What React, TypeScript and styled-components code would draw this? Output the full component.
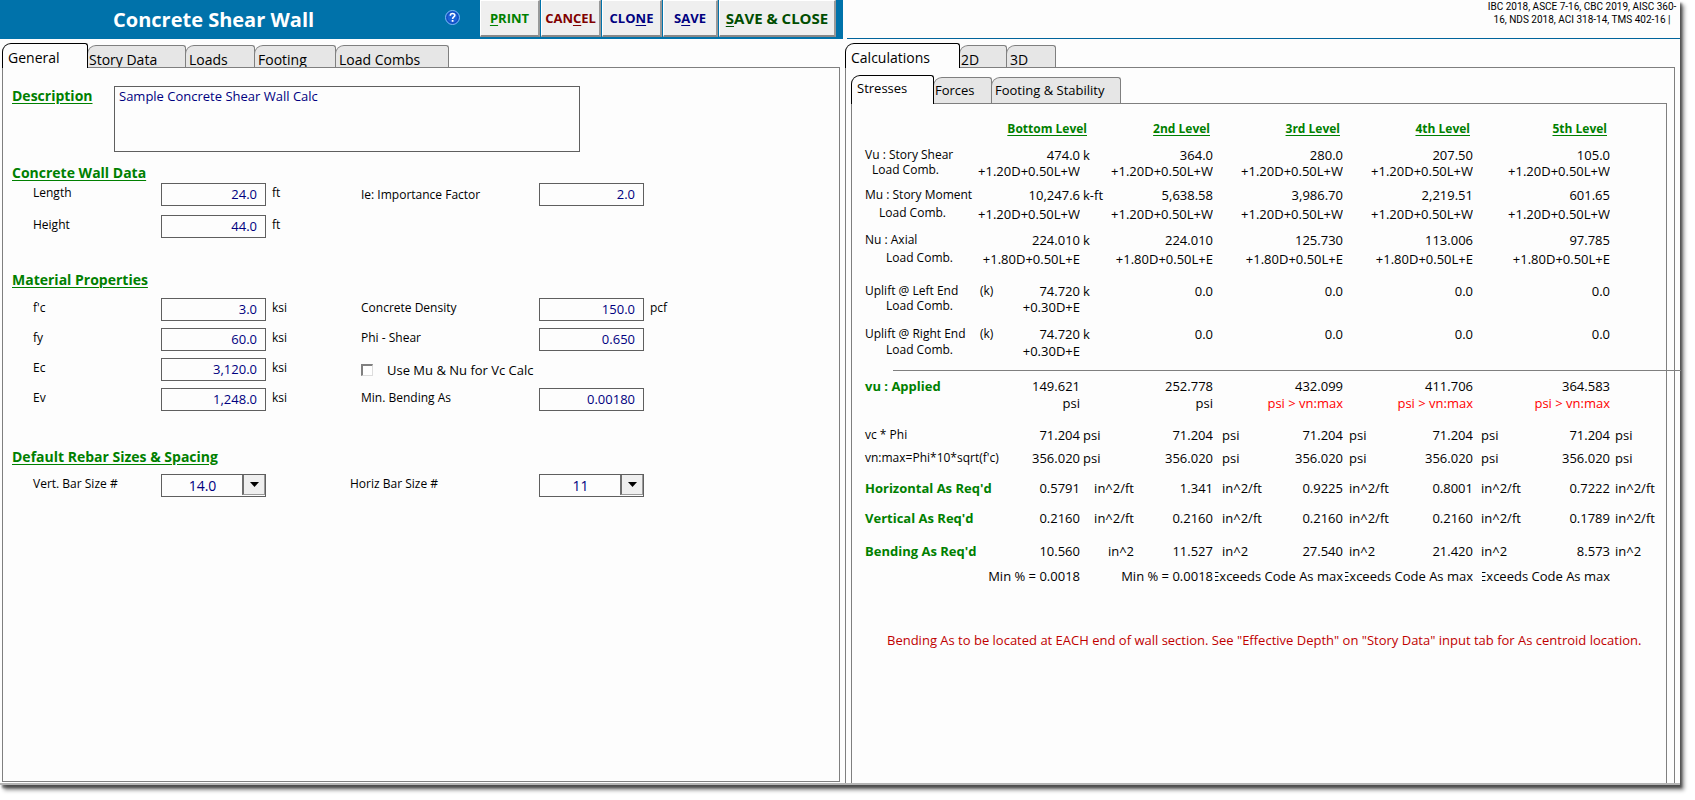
import React from 'react';
import styled, { createGlobalStyle, css } from 'styled-components';

const GREEN = '#008000';
const NAVY = '#000080';
const LINE = '#7f7f7f';
const SURFACE = '#fdfdfd';

const GlobalStyle = createGlobalStyle`
  *, *::before, *::after { box-sizing: border-box; }
  body {
    margin: 0;
    background: #ffffff;
    color: #000000;
    font-family: "Open Sans", "Noto Sans", sans-serif;
    font-size: 12px;
    line-height: 20px;
  }
  button, input, select, textarea { font-family: inherit; border-radius: 0; margin: 0; }
`;

/* ---------- window ---------- */

const Window = styled.main`
  display: grid;
  grid-template-columns: minmax(0, 843fr) minmax(0, 837fr);
  min-height: calc(100vh - 15px);
  margin: 0 15px 15px 0;
  background: ${SURFACE};
  border-bottom: 2px solid #b4b4b4;
  box-shadow: 2px 3px 2px rgba(0, 0, 0, 0.45), 4px 5px 4px rgba(0, 0, 0, 0.45);
`;

const Pane = styled.section`
  display: flex;
  flex-direction: column;
`;

const TitleBar = styled.header`
  display: flex;
  align-items: center;
  height: 39px;
  padding-right: 7px;
  background: #0072aa;
`;

const Title = styled.h1`
  flex: 1;
  margin: 0;
  padding: 1px 0 0 113px;
  color: #ffffff;
  font-size: 20px;
  line-height: 38px;
  white-space: nowrap;
`;

const HelpButton = styled.button`
  width: 15px;
  height: 15px;
  margin: 0 20px 4px 0;
  padding: 0;
  border: 0;
  background: none;
  svg { display: block; }
`;

const Actions = styled.div`
  display: flex;
  gap: 1px;
  align-self: flex-start;
`;

const ActionButton = styled.button<{ $color: string; $width: number; $large?: boolean }>`
  width: ${p => p.$width}px;
  height: 37px;
  padding: 0;
  border: solid;
  border-width: 1px 2px 2px 1px;
  border-color: #ffffff #999999 #888888 #ffffff;
  background: #efefef;
  color: ${p => p.$color};
  font-size: ${p => (p.$large ? 15 : 13)}px;
  font-weight: 700;
  white-space: nowrap;
  u { text-underline-offset: 2px; }
`;

const CodesBar = styled.header`
  display: flex;
  justify-content: flex-end;
  height: 39px;
  margin-left: 4px;
  border-bottom: 1px solid #00649c;
`;

const Codes = styled.p`
  width: 196px;
  margin: 0;
  font-family: Roboto, sans-serif;
  font-size: 10px;
  line-height: 13px;
  text-align: center;
  white-space: nowrap;
`;

/* ---------- tabs ---------- */

const TabBar = styled.div<{ $inner?: boolean }>`
  display: flex;
  align-items: flex-end;
  height: ${p => (p.$inner ? 35 : 28)}px;
  padding-left: ${p => (p.$inner ? 5 : 2)}px;
`;

const Tab = styled.button<{ $width: number; $active?: boolean; $inner?: boolean }>`
  display: flex;
  align-items: flex-start;
  position: relative;
  width: ${p => p.$width}px;
  height: ${p => (p.$inner ? 26 : 22)}px;
  margin-left: -1px;
  padding: ${p => (p.$inner ? 2 : 4)}px 0 0 3px;
  overflow: hidden;
  border: 1px solid ${LINE};
  border-bottom: 0;
  border-radius: 9px 3px 0 0;
  background: #e6e6e6;
  color: #000000;
  font-size: ${p => (p.$inner ? 13 : 14)}px;
  line-height: 20px;
  white-space: nowrap;
  &:nth-child(2) { padding-left: 1px; }
  ${p => p.$active && css`
    z-index: 1;
    height: ${p.$inner ? 29 : 25}px;
    margin-left: 0;
    margin-bottom: -1px;
    padding-left: 5px;
    border-color: #000000;
    background: ${SURFACE};
  `}
`;

const InputPanel = styled.div`
  flex: 1;
  margin: 0 3px 1px 2px;
  padding: 18px 9px 24px;
  border: 1px solid ${LINE};
`;

const OutputPanel = styled.div`
  display: flex;
  flex: 1;
  flex-direction: column;
  margin: 0 5px 0 2px;
  border: 1px solid ${LINE};
  border-bottom: 0;
`;

const StressPanel = styled.div`
  flex: 1;
  margin: 0 7px 0 5px;
  padding: 0 0 24px 13px;
  border: 1px solid ${LINE};
  border-bottom: 0;
`;

/* ---------- input form ---------- */

const headingText = css`
  margin: 0;
  color: ${GREEN};
  font-size: 14px;
  font-weight: 700;
  line-height: 20px;
  text-decoration: underline;
  text-underline-offset: 2px;
`;

const DescriptionRow = styled.div`
  display: grid;
  grid-template-columns: 102px minmax(0, 466px);
  align-items: start;
`;

const DescriptionLabel = styled.label`${headingText}`;

const DescriptionBox = styled.textarea`
  display: block;
  height: 66px;
  padding: 0 4px;
  border: 1px solid #5f5f5f;
  background: ${SURFACE};
  color: ${NAVY};
  font-size: 13px;
  line-height: 18px;
  resize: none;
`;

const Section = styled.section<{ $top: number }>`
  padding-top: ${p => p.$top}px;
`;

const Heading = styled.h2`${headingText}`;

const Rows = styled.div<{ $gap: number; $top: number }>`
  display: grid;
  gap: ${p => p.$gap}px;
  padding: ${p => p.$top}px 0 0 21px;
`;

const Row = styled.div<{ $wide?: boolean }>`
  display: grid;
  grid-template-columns: ${p => (p.$wide ? '128px 105px 84px 189px 105px' : '128px 105px 95px 178px 105px auto')};
  height: 23px;
`;

const Label = styled.label<{ $centered?: boolean }>`
  align-self: ${p => (p.$centered ? 'center' : 'start')};
  white-space: nowrap;
`;

const Unit = styled.span`
  padding-left: 6px;
`;

const NumberBox = styled.input`
  width: 100%;
  height: 23px;
  padding: 0 8px 2px;
  border: 1px solid #5f5f5f;
  background: ${SURFACE};
  color: ${NAVY};
  font-size: 13px;
  text-align: right;
`;

const CheckLabel = styled.label`
  display: flex;
  grid-column: 4 / 6;
  align-items: center;
  gap: 14px;
  font-size: 13px;
`;

const CheckBox = styled.input`
  width: 12px;
  height: 12px;
  appearance: none;
  border: solid;
  border-width: 2px 1px 1px 2px;
  border-color: #808080 #dddddd #dddddd #808080;
  background: #ffffff;
`;

const SelectFrame = styled.div`
  position: relative;
`;

const Select = styled.select`
  width: 100%;
  height: 23px;
  padding: 0 22px 0 0;
  appearance: none;
  border: 1px solid #5f5f5f;
  background: ${SURFACE};
  color: ${NAVY};
  font-size: 14px;
  text-align: center;
  text-align-last: center;
`;

const DropMark = styled.span`
  display: grid;
  place-items: center;
  position: absolute;
  top: 1px;
  right: 1px;
  width: 23px;
  height: 20px;
  border: solid #9a9a9a;
  border-width: 0 1px 1px 2px;
  border-left-color: #6e6e6e;
  background: #efefef;
  pointer-events: none;
`;

/* ---------- results table ---------- */

const Results = styled.table`
  width: 100%;
  table-layout: fixed;
  border-collapse: collapse;
  font-size: 13px;
  line-height: 16px;
  white-space: nowrap;
`;

const Col = styled.col<{ $width?: number }>`
  width: ${p => (p.$width ? `${p.$width}px` : 'auto')};
`;

const Line = styled.tr<{ $height: number }>`
  height: ${p => p.$height}px;
  > * { padding: 0; vertical-align: bottom; }
`;

const LevelHead = styled.th`
  color: ${GREEN};
  font-size: 12px;
  text-align: right;
  text-decoration: underline;
  text-underline-offset: 2px;
  /* the captions end a little past or short of the figures below them */
  span { margin-right: 3px; }
  &:nth-of-type(2) span { margin-right: -7px; }
`;

const RowHead = styled.th<{ $strong?: boolean; $indent?: number; $raised?: boolean }>`
  && {
    padding-left: ${p => p.$indent ?? 0}px;
    padding-bottom: ${p => (p.$raised ? 2 : 0)}px;
  }
  color: ${p => (p.$strong ? GREEN : 'inherit')};
  font-size: ${p => (p.$strong ? 13 : 12)}px;
  font-weight: ${p => (p.$strong ? 700 : 400)};
  line-height: ${p => (p.$raised ? 14 : 16)}px;
  text-align: left;
`;

const UpliftName = styled.span`
  display: inline-block;
  width: 115px;
`;

const Value = styled.td<{ $alert?: boolean }>`
  color: ${p => (p.$alert ? '#ff0000' : 'inherit')};
  text-align: right;
`;

/* Text wider than its column loses its leading edge. */
const Clip = styled.div`
  display: flex;
  justify-content: flex-end;
  margin-left: -4px;
  overflow: hidden;
`;

const ValueUnit = styled.span<{ $offset: number; $align?: boolean }>`
  display: inline-block;
  margin-left: ${p => (p.$align ? 0 : p.$offset)}px;
  width: ${p => (p.$align ? '54px' : 'auto')};
  text-align: ${p => (p.$align ? 'right' : 'left')};
`;

const Rule = styled.hr`
  height: 1px;
  margin: 0 -15px 0 28px;
  border: 0;
  background: ${LINE};
`;

const Notice = styled.p`
  margin: 46px 0 0 22px;
  color: #c00000;
  font-size: 13px;
  white-space: nowrap;
`;

const HelpIcon = () => (
  <svg width="15" height="15" viewBox="0 0 15 15" aria-hidden="true">
    <circle cx="7.5" cy="7.5" r="7" fill="#1c62d8" stroke="#7db8f4" />
    <circle cx="7.5" cy="7.5" r="5.6" fill="none" stroke="#0b3fae" strokeWidth="0.8" />
    <path d="M5.3 5.7C5.3 4.2 6.2 3.5 7.5 3.5S9.8 4.3 9.8 5.5C9.8 6.9 7.6 7.1 7.6 8.9" fill="none" stroke="#fff" strokeWidth="1.6" />
    <rect x="6.7" y="10" width="1.8" height="1.8" fill="#fff" />
  </svg>
);

const Field = ({ id, label, value, unit, centered }: { id: string; label: string; value: string; unit?: string; centered?: boolean }) => (
  <>
    <Label htmlFor={id} $centered={centered}>{label}</Label>
    <NumberBox id={id} defaultValue={value} />
    <Unit>{unit}</Unit>
  </>
);

const SizeSelect = ({ id, label, value }: { id: string; label: string; value: string }) => (
  <>
    <Label htmlFor={id}>{label}</Label>
    <SelectFrame>
      <Select id={id} defaultValue={value}><option>{value}</option></Select>
      <DropMark>
        <svg width="9" height="5" viewBox="0 0 9 5" aria-hidden="true"><path d="M0 0H9L4.5 5Z" /></svg>
      </DropMark>
    </SelectFrame>
  </>
);

const LEVELS = ['Bottom Level', '2nd Level', '3rd Level', '4th Level', '5th Level'];
const UNIT_OFFSETS = [3, 9, 6, 8, 5];

type RowData = {
  height: number;
  label?: React.ReactNode;
  strong?: boolean;
  indent?: number;
  values: string[];
  units?: string[];
  alignFirst?: boolean;
  alertFrom?: number;
};

const same = (text: string) => Array<string>(5).fill(text);

const forces: RowData[] = [
  { height: 26, label: 'Vu : Story Shear', values: ['474.0', '364.0', '280.0', '207.50', '105.0'], units: ['k'] },
  { height: 16, label: 'Load Comb.', indent: 7, values: same('+1.20D+0.50L+W') },
  { height: 24, label: 'Mu : Story Moment', values: ['10,247.6', '5,638.58', '3,986.70', '2,219.51', '601.65'], units: ['k-ft'] },
  { height: 19, label: 'Load Comb.', indent: 14, values: same('+1.20D+0.50L+W') },
  { height: 26, label: 'Nu : Axial', values: ['224.010', '224.010', '125.730', '113.006', '97.785'], units: ['k'] },
  { height: 19, label: 'Load Comb.', indent: 21, values: same('+1.80D+0.50L+E') },
  { height: 32, label: <><UpliftName>Uplift @ Left End</UpliftName>(k)</>, values: ['74.720', '0.0', '0.0', '0.0', '0.0'], units: ['k'] },
  { height: 16, label: 'Load Comb.', indent: 21, values: ['+0.30D+E', '', '', '', ''] },
  { height: 27, label: <><UpliftName>Uplift @ Right End</UpliftName>(k)</>, values: ['74.720', '0.0', '0.0', '0.0', '0.0'], units: ['k'] },
  { height: 17, label: 'Load Comb.', indent: 21, values: ['+0.30D+E', '', '', '', ''] },
];

const stresses: RowData[] = [
  { height: 23, label: 'vu : Applied', strong: true, values: ['149.621', '252.778', '432.099', '411.706', '364.583'] },
  { height: 17, values: ['psi', 'psi', 'psi > vn:max', 'psi > vn:max', 'psi > vn:max'], alertFrom: 2 },
  { height: 32, label: 'vc * Phi', values: same('71.204'), units: same('psi') },
  { height: 23, label: "vn:max=Phi*10*sqrt(f'c)", values: same('356.020'), units: same('psi') },
  { height: 30, label: "Horizontal As Req'd", strong: true, values: ['0.5791', '1.341', '0.9225', '0.8001', '0.7222'], units: same('in^2/ft'), alignFirst: true },
  { height: 30, label: "Vertical As Req'd", strong: true, values: ['0.2160', '0.2160', '0.2160', '0.2160', '0.1789'], units: same('in^2/ft'), alignFirst: true },
  { height: 33, label: "Bending As Req'd", strong: true, values: ['10.560', '11.527', '27.540', '21.420', '8.573'], units: same('in^2'), alignFirst: true },
  { height: 25, values: ['Min % = 0.0018', 'Min % = 0.0018', 'Exceeds Code As max', 'Exceeds Code As max', 'Exceeds Code As max'] },
];

const ResultRow = ({ row }: { row: RowData }) => (
  <Line $height={row.height}>
    <RowHead scope="row" $strong={row.strong} $indent={row.indent} $raised={row.indent !== undefined}>{row.label}</RowHead>
    {row.values.map((value, i) => (
      <React.Fragment key={i}>
        <Value $alert={row.alertFrom !== undefined && i >= row.alertFrom}><Clip><span>{value}</span></Clip></Value>
        <td>
          {row.units?.[i] && (
            <ValueUnit $offset={UNIT_OFFSETS[i]} $align={row.alignFirst && i === 0}>{row.units[i]}</ValueUnit>
          )}
        </td>
      </React.Fragment>
    ))}
  </Line>
);

export default function App() {
  return (
    <>
      <GlobalStyle />
      <Window>
        <Pane>
          <TitleBar>
            <Title>Concrete Shear Wall</Title>
            <HelpButton aria-label="Help"><HelpIcon /></HelpButton>
            <Actions>
              <ActionButton $color={GREEN} $width={60}><u>P</u>RINT</ActionButton>
              <ActionButton $color="#800000" $width={60}>CAN<u>C</u>EL</ActionButton>
              <ActionButton $color={NAVY} $width={60}>CLO<u>N</u>E</ActionButton>
              <ActionButton $color={NAVY} $width={55}>S<u>A</u>VE</ActionButton>
              <ActionButton $color="#004d00" $width={117} $large><u>S</u>AVE &amp; CLOSE</ActionButton>
            </Actions>
          </TitleBar>
          <TabBar>
            <Tab $width={86} $active>General</Tab>
            <Tab $width={99}>Story Data</Tab>
            <Tab $width={70}>Loads</Tab>
            <Tab $width={82}>Footing</Tab>
            <Tab $width={114}>Load Combs</Tab>
          </TabBar>
          <InputPanel>
            <DescriptionRow>
              <DescriptionLabel htmlFor="description">Description</DescriptionLabel>
              <DescriptionBox id="description" spellCheck={false} defaultValue="Sample Concrete Shear Wall Calc" />
            </DescriptionRow>
            <Section $top={11}>
              <Heading>Concrete Wall Data</Heading>
              <Rows $gap={9} $top={0}>
                <Row>
                  <Field id="length" label="Length" value="24.0" unit="ft" />
                  <Field id="importance" label="Ie: Importance Factor" value="2.0" centered />
                </Row>
                <Row>
                  <Field id="height" label="Height" value="44.0" unit="ft" />
                </Row>
              </Rows>
            </Section>
            <Section $top={32}>
              <Heading>Material Properties</Heading>
              <Rows $gap={7} $top={8}>
                <Row>
                  <Field id="fc" label="f'c" value="3.0" unit="ksi" />
                  <Field id="density" label="Concrete Density" value="150.0" unit="pcf" />
                </Row>
                <Row>
                  <Field id="fy" label="fy" value="60.0" unit="ksi" />
                  <Field id="phi" label="Phi - Shear" value="0.650" />
                </Row>
                <Row>
                  <Field id="ec" label="Ec" value="3,120.0" unit="ksi" />
                  <CheckLabel><CheckBox type="checkbox" />Use Mu &amp; Nu for Vc Calc</CheckLabel>
                </Row>
                <Row>
                  <Field id="ev" label="Ev" value="1,248.0" unit="ksi" />
                  <Field id="minas" label="Min. Bending As" value="0.00180" />
                </Row>
              </Rows>
            </Section>
            <Section $top={36}>
              <Heading>Default Rebar Sizes &amp; Spacing</Heading>
              <Rows $gap={7} $top={7}>
                <Row $wide>
                  <SizeSelect id="vbar" label="Vert. Bar Size #" value="14.0" />
                  <span />
                  <SizeSelect id="hbar" label="Horiz Bar Size #" value="11" />
                </Row>
              </Rows>
            </Section>
          </InputPanel>
        </Pane>

        <Pane>
          <CodesBar>
            <Codes>IBC 2018, ASCE 7-16, CBC 2019, AISC 360-<br />16, NDS 2018, ACI 318-14, TMS 402-16 |</Codes>
          </CodesBar>
          <TabBar>
            <Tab $width={115} $active>Calculations</Tab>
            <Tab $width={48}>2D</Tab>
            <Tab $width={50}>3D</Tab>
          </TabBar>
          <OutputPanel>
            <TabBar $inner>
              <Tab $width={83} $inner $active>Stresses</Tab>
              <Tab $width={59} $inner>Forces</Tab>
              <Tab $width={130} $inner>Footing &amp; Stability</Tab>
            </TabBar>
            <StressPanel>
              <Results>
                <colgroup>
                  <Col $width={91} />
                  <Col $width={124} /><Col $width={9} />
                  <Col $width={124} /><Col $width={6} />
                  <Col $width={124} /><Col $width={6} />
                  <Col $width={124} /><Col $width={13} />
                  <Col $width={124} /><Col />
                </colgroup>
                <thead>
                  <Line $height={33}>
                    <th />
                    {LEVELS.map(level => (
                      <React.Fragment key={level}>
                        <LevelHead scope="col"><span>{level}</span></LevelHead>
                        <td />
                      </React.Fragment>
                    ))}
                  </Line>
                </thead>
                <tbody>{forces.map((row, i) => <ResultRow key={i} row={row} />)}</tbody>
                <tbody>
                  <Line $height={12}><td colSpan={11}><Rule /></td></Line>
                </tbody>
                <tbody>{stresses.map((row, i) => <ResultRow key={i} row={row} />)}</tbody>
              </Results>
              <Notice>Bending As to be located at EACH end of wall section. See "Effective Depth" on "Story Data" input tab for As centroid location.</Notice>
            </StressPanel>
          </OutputPanel>
        </Pane>
      </Window>
    </>
  );
}
